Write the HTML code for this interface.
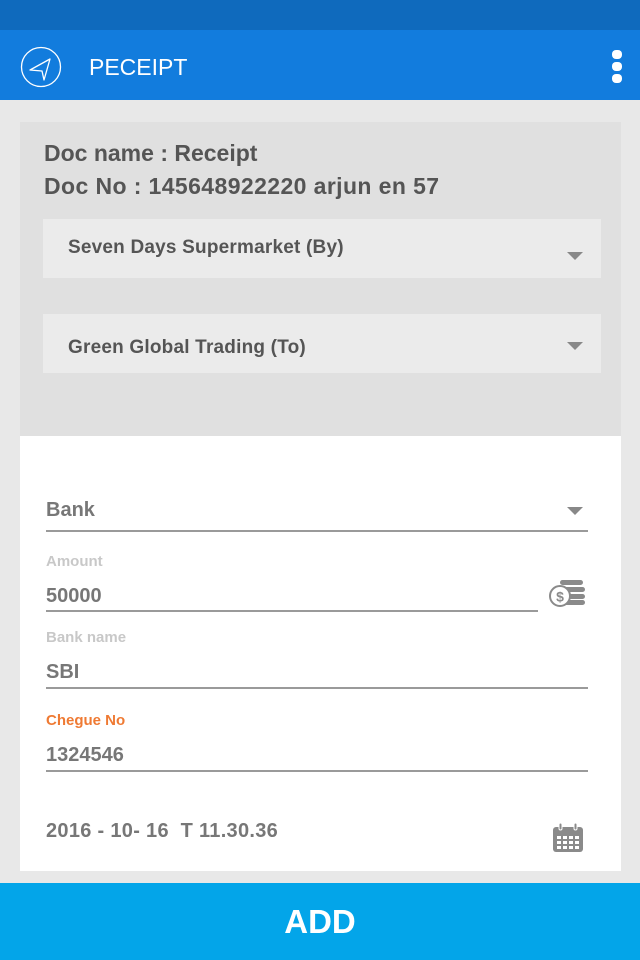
<!DOCTYPE html>
<html><head><style>
*{margin:0;padding:0;box-sizing:border-box}
body{width:640px;height:960px;background:#e8e8e8;font-family:"Liberation Sans",sans-serif;position:relative;overflow:hidden}
.abs{position:absolute}
.t{font-weight:bold;color:#555}
.line{position:absolute;height:2px;background:#9a9a9a}
.lbl{position:absolute;font-size:15px;font-weight:bold;color:#c8c8c8}
.val{position:absolute;font-size:20px;font-weight:bold;color:#777}
.tri{position:absolute;width:0;height:0;border-left:8px solid transparent;border-right:8px solid transparent;border-top:8px solid #888}
</style></head><body>
<div class="abs" style="left:0;top:0;width:640px;height:30px;background:#0f6abd"></div>
<div class="abs" style="left:0;top:30px;width:640px;height:70px;background:#127cdd"></div>
<svg class="abs" style="left:20px;top:46px" width="44" height="42" viewBox="0 0 44 42"><ellipse cx="21" cy="21" rx="19.5" ry="19.5" fill="none" stroke="#fff" stroke-width="1.3"/><path d="M10 24 L30 13 L24 34 L22 25 Z" fill="none" stroke="#fff" stroke-width="1.3" stroke-linejoin="round"/></svg>
<div class="abs" style="left:89px;top:54px;font-size:23px;color:#fff">PECEIPT</div>
<div class="abs" style="left:612px;top:50px;width:10px;height:9px;border-radius:4px;background:#fff"></div>
<div class="abs" style="left:612px;top:62px;width:10px;height:9px;border-radius:4px;background:#fff"></div>
<div class="abs" style="left:612px;top:74px;width:10px;height:9px;border-radius:4px;background:#fff"></div>

<div class="abs" style="left:20px;top:122px;width:601px;height:314px;background:#e0e0e0"></div>
<div class="abs t" style="left:44px;top:140px;font-size:23px">Doc name : Receipt</div>
<div class="abs t" style="left:44px;top:173px;font-size:23px;letter-spacing:0.4px">Doc No : 145648922220 arjun en 57</div>
<div class="abs" style="left:43px;top:219px;width:558px;height:59px;background:#ebebeb"></div>
<div class="abs t" style="left:68px;top:237px;font-size:19px;letter-spacing:0.2px">Seven Days Supermarket (By)</div>
<div class="tri" style="left:567px;top:252px"></div>
<div class="abs" style="left:43px;top:314px;width:558px;height:59px;background:#ebebeb"></div>
<div class="abs t" style="left:68px;top:337px;font-size:19px;letter-spacing:0.2px">Green Global Trading (To)</div>
<div class="tri" style="left:567px;top:342px"></div>

<div class="abs" style="left:20px;top:436px;width:601px;height:435px;background:#fff"></div>
<div class="val" style="left:46px;top:499px">Bank</div>
<div class="tri" style="left:567px;top:507px"></div>
<div class="line" style="left:46px;top:530px;width:542px"></div>
<div class="lbl" style="left:46px;top:553px">Amount</div>
<div class="val" style="left:46px;top:585px">50000</div>
<div class="line" style="left:46px;top:610px;width:492px"></div>
<svg class="abs" style="left:549px;top:579px" width="37" height="28" viewBox="0 0 37 28"><rect x="11" y="1" width="23" height="5" rx="2.5" fill="#8a8a8a"/><rect x="14" y="8" width="22" height="5" rx="2.5" fill="#8a8a8a"/><rect x="14" y="15" width="22" height="5" rx="2.5" fill="#8a8a8a"/><rect x="14" y="21" width="22" height="5" rx="2.5" fill="#8a8a8a"/><circle cx="11" cy="17" r="10" fill="#fff" stroke="#8a8a8a" stroke-width="2"/><text x="11" y="22.5" font-size="14" font-weight="bold" fill="#8a8a8a" text-anchor="middle" font-family="Liberation Sans">$</text></svg>
<div class="lbl" style="left:46px;top:629px">Bank name</div>
<div class="val" style="left:46px;top:661px">SBI</div>
<div class="line" style="left:46px;top:687px;width:542px"></div>
<div class="lbl" style="left:46px;top:712px;color:#ef7a33">Chegue No</div>
<div class="val" style="left:46px;top:744px">1324546</div>
<div class="line" style="left:46px;top:770px;width:542px"></div>
<div class="val" style="left:46px;top:820px;letter-spacing:0.3px">2016 - 10- 16&nbsp; T 11.30.36</div>
<svg class="abs" style="left:552px;top:823px" width="32" height="30" viewBox="0 0 32 30"><rect x="1" y="4" width="30" height="25" rx="3" fill="#8a8a8a"/><rect x="7" y="0" width="3" height="7" rx="1.5" fill="#8a8a8a" stroke="#fff" stroke-width="1"/><rect x="22" y="0" width="3" height="7" rx="1.5" fill="#8a8a8a" stroke="#fff" stroke-width="1"/><g fill="#fff"><rect x="5" y="13" width="4" height="3"/><rect x="11" y="13" width="4" height="3"/><rect x="17" y="13" width="4" height="3"/><rect x="23" y="13" width="4" height="3"/><rect x="5" y="18" width="4" height="3"/><rect x="11" y="18" width="4" height="3"/><rect x="17" y="18" width="4" height="3"/><rect x="23" y="18" width="4" height="3"/><rect x="5" y="23" width="4" height="3"/><rect x="11" y="23" width="4" height="3"/><rect x="17" y="23" width="4" height="3"/><rect x="23" y="23" width="4" height="3"/></g></svg>

<div class="abs" style="left:0;top:883px;width:640px;height:77px;background:#03a5e9"></div>
<div class="abs" style="left:0;top:903px;width:640px;text-align:center;font-size:33px;font-weight:bold;color:#fff">ADD</div>
</body></html>
